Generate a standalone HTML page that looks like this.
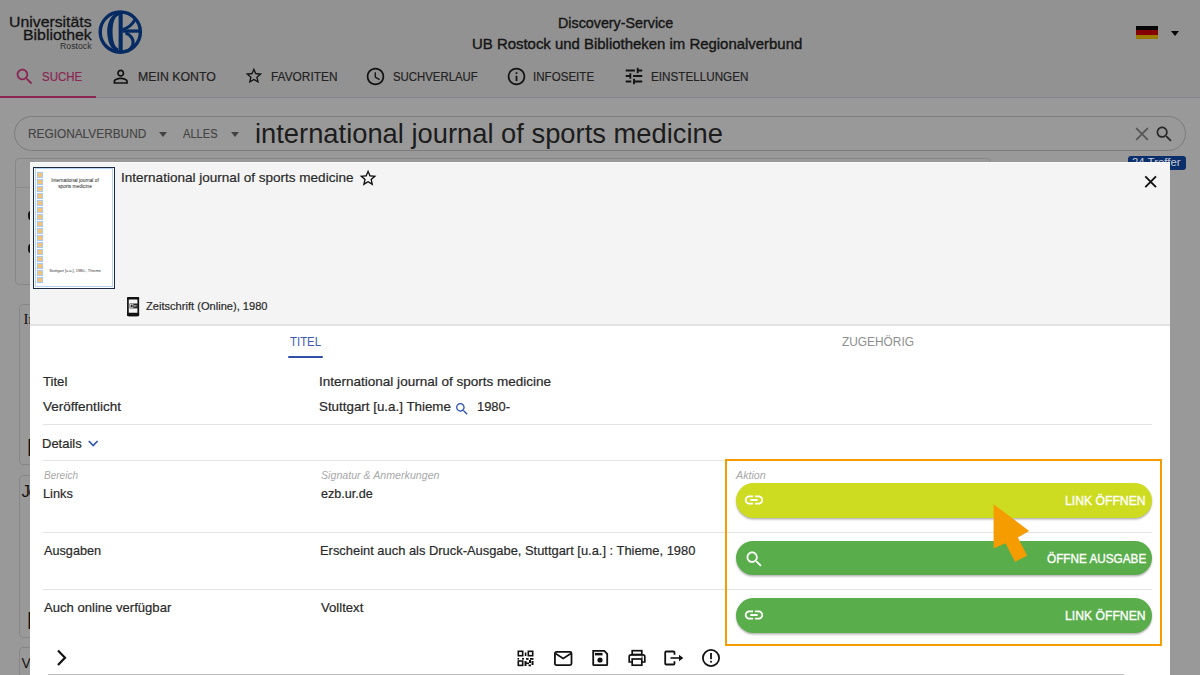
<!DOCTYPE html>
<html><head><meta charset="utf-8">
<style>
*{margin:0;padding:0;box-sizing:border-box}
html,body{width:1200px;height:675px;overflow:hidden;background:#999999;font-family:"Liberation Sans",sans-serif}
.a{position:absolute}
.t{position:absolute;white-space:nowrap;transform-origin:0 0}
.hr{position:absolute;height:1px;background:#e3e3e3}
.btn{position:absolute;left:735.5px;width:416px;height:34.5px;border-radius:17.5px;box-shadow:0 1.5px 2px rgba(0,0,0,.3)}
svg{position:absolute;overflow:visible}
</style></head><body>
<div class="a" style="left:0;top:0;width:1200px;height:97px;background:#929292"></div>
<!-- logo -->
<svg style="left:95px;top:5px" width="50" height="55" viewBox="0 0 50 55">
<circle cx="25.3" cy="27.1" r="20.1" fill="none" stroke="#062b62" stroke-width="3.4"/>
<path fill="#062b62" d="M24 7.6 C15 9 11.5 20 12.3 29 C13 39 16.5 45.5 23 46.3 L23.5 43.5 C19.8 42.5 17.6 36 17.6 27.5 C17.6 18 19.5 11.5 24 10.3 Z"/>
<rect x="23.6" y="7.3" width="4.1" height="39.5" fill="#062b62"/>
<path d="M19.5 44.3 L22.5 45.6" stroke="#062b62" stroke-width="2.2"/>
<path d="M27.5 24.6 C32 23.5 37.5 19.5 40.6 13.8" fill="none" stroke="#062b62" stroke-width="3"/>
<rect x="27.5" y="24.4" width="18" height="3.3" fill="#062b62"/>
<path d="M30.5 27.8 C37 30 39.3 36 37.5 40.5 C36.5 43 34.5 45 32 46.3" fill="none" stroke="#062b62" stroke-width="3"/>
</svg>
<!-- flag -->
<div class="a" style="left:1136px;top:26px;width:22px;height:4.4px;background:#050505"></div>
<div class="a" style="left:1136px;top:30.4px;width:22px;height:4.4px;background:#850000"></div>
<div class="a" style="left:1136px;top:34.8px;width:22px;height:4.4px;background:#9a7b00"></div>
<div class="a" style="left:1171px;top:31px;width:0;height:0;border-left:4.5px solid transparent;border-right:4.5px solid transparent;border-top:5px solid #050505"></div>
<!-- nav icons -->
<svg style="left:13.84px;top:66.1px" width="21.3" height="21.3" viewBox="0 0 24 24"><path fill="#8b2554" d="M15.5 14h-.79l-.28-.27C15.41 12.59 16 11.11 16 9.5 16 5.91 13.09 3 9.5 3S3 5.91 3 9.5 5.91 16 9.5 16c1.61 0 3.09-.59 4.23-1.57l.27.28v.79l5 4.99L20.49 19l-4.99-5zm-6 0C7.01 14 5 11.99 5 9.5S7.01 5 9.5 5 14 7.01 14 9.5 11.99 14 9.5 14z"/></svg>
<svg style="left:109.7px;top:65.5px" width="21.45" height="21.45" viewBox="0 0 24 24"><path fill="#121212" d="M12 5.9c1.16 0 2.1.94 2.1 2.1s-.94 2.1-2.1 2.1S9.9 9.16 9.9 8s.94-2.1 2.1-2.1m0 9c2.97 0 6.1 1.46 6.1 2.1v1.1H5.9V17c0-.64 3.13-2.1 6.1-2.1M12 4C9.79 4 8 5.79 8 8s1.79 4 4 4 4-1.79 4-4-1.79-4-4-4zm0 9c-2.67 0-8 1.34-8 4v3h16v-3c0-2.66-5.33-4-8-4z"/></svg>
<svg style="left:244.35px;top:66.35px" width="19.8" height="19.8" viewBox="0 0 24 24"><path fill="#121212" d="M22 9.24l-7.19-.62L12 2 9.19 8.63 2 9.24l5.46 4.73L5.82 21 12 17.27 18.18 21l-1.63-7.03L22 9.24zM12 15.4l-3.76 2.27 1-4.28-3.32-2.88 4.38-.38L12 6.1l1.71 4.04 4.38.38-3.32 2.88 1 4.28L12 15.4z"/></svg>
<svg style="left:365.25px;top:66.25px" width="21" height="21" viewBox="0 0 24 24"><path fill="#121212" d="M11.99 2C6.47 2 2 6.48 2 12s4.47 10 9.99 10C17.52 22 22 17.52 22 12S17.52 2 11.99 2zM12 20c-4.42 0-8-3.58-8-8s3.58-8 8-8 8 3.58 8 8-3.58 8-8 8zm.5-13H11v6l5.25 3.15.75-1.230-4.5-2.67z"/></svg>
<svg style="left:505.75px;top:66.25px" width="21" height="21" viewBox="0 0 24 24"><path fill="#121212" d="M11 7h2v2h-2zm0 4h2v6h-2zm1-9C6.48 2 2 6.48 2 12s4.48 10 10 10 10-4.48 10-10S17.52 2 12 2zm0 18c-4.41 0-8-3.59-8-8s3.59-8 8-8 8 3.59 8 8-3.59 8-8 8z"/></svg>
<svg style="left:622.75px;top:65.4px" width="22" height="22" viewBox="0 0 24 24"><path fill="#121212" d="M3 17v2h6v-2H3zM3 5v2h10V5H3zm10 16v-2h8v-2h-8v-2h-2v6h2zM7 9v2H3v2h4v2h2V9H7zm14 4v-2H11v2h10zm-6-4h2V7h4V5h-4V3h-2v6z"/></svg>
<div class="a" style="left:0;top:95.8px;width:96px;height:2px;background:#8b2554"></div>
<div class="a" style="left:96px;top:97px;width:1104px;height:1px;background:#85828b"></div>
<!-- search bar -->
<div class="a" style="left:14px;top:116px;width:1172px;height:34.5px;border:1px solid #7c7c7c;border-radius:17.5px"></div>
<div class="a" style="left:159px;top:131.5px;width:0;height:0;border-left:4.5px solid transparent;border-right:4.5px solid transparent;border-top:5px solid #444"></div>
<div class="a" style="left:230.5px;top:131.5px;width:0;height:0;border-left:4.5px solid transparent;border-right:4.5px solid transparent;border-top:5px solid #444"></div>
<svg style="left:1130px;top:122px" width="24" height="24" viewBox="0 0 24 24"><path d="M6.2 6.2 L17.8 17.8 M17.8 6.2 L6.2 17.8" stroke="#555" stroke-width="1.7"/></svg>
<svg style="left:1154.3px;top:124.3px" width="20.6" height="20.6" viewBox="0 0 24 24"><path fill="#2a2a2a" d="M15.5 14h-.79l-.28-.27C15.41 12.59 16 11.11 16 9.5 16 5.91 13.09 3 9.5 3S3 5.91 3 9.5 5.91 16 9.5 16c1.61 0 3.09-.59 4.23-1.57l.27.28v.79l5 4.99L20.49 19l-4.99-5zm-6 0C7.01 14 5 11.99 5 9.5S7.01 5 9.5 5 14 7.01 14 9.5 11.99 14 9.5 14z"/></svg>
<!-- cards behind -->
<div class="a" style="left:14.5px;top:158px;width:976px;height:126.5px;border:1px solid #878787;border-radius:4px"></div>
<div class="a" style="left:15px;top:187px;width:20px;height:1px;background:#8a8a8a"></div>
<div class="a" style="left:18.5px;top:303.5px;width:976px;height:161px;border:1px solid #878787;border-radius:4px"></div>
<div class="a" style="left:18.5px;top:475px;width:976px;height:163px;border:1px solid #878787;border-radius:4px"></div>
<div class="a" style="left:18.5px;top:647px;width:976px;height:60px;border:1px solid #878787;border-radius:4px"></div>
<div class="a" style="left:28.3px;top:210.5px;width:5px;height:9.5px;border-left:2px solid #151515;border-radius:50%"></div>
<div class="a" style="left:28.3px;top:243.5px;width:5px;height:9.5px;border-left:2px solid #151515;border-radius:50%"></div>
<div class="t" style="left:23.5px;top:312px;font-family:'Liberation Serif',serif;font-size:15px;line-height:15px;color:#121212">In</div>
<div class="t" style="left:27.3px;top:436px;font-size:19px;line-height:19px;color:#121212">[</div>
<div class="t" style="left:21.5px;top:483px;font-size:17px;line-height:17px;color:#121212;letter-spacing:-1.5px">Jo</div>
<div class="t" style="left:27.3px;top:608.5px;font-size:19px;line-height:19px;color:#121212">[</div>
<div class="t" style="left:21.5px;top:655.5px;font-size:14px;line-height:14px;color:#121212">V</div>
<div class="a" style="left:1128px;top:156px;width:58px;height:14px;background:#0b2f6b;border-radius:3px"></div>
<div class="t" style="left:9.08px;top:14.03px;font-size:15.5px;line-height:15.5px;color:#141414;-webkit-text-stroke:0.3px #141414;transform:scaleX(1.0200)">Universitäts</div>
<div class="t" style="left:23.38px;top:27.03px;font-size:15.5px;line-height:15.5px;color:#141414;-webkit-text-stroke:0.3px #141414;transform:scaleX(1.0227)">Bibliothek</div>
<div class="t" style="left:60.15px;top:42.12px;font-size:8.3px;line-height:8.3px;color:#2c2c2c;transform:scaleX(1.0517)">Rostock</div>
<div class="t" style="left:557.80px;top:15.45px;font-size:15px;line-height:15px;color:#161616;-webkit-text-stroke:0.4px #161616;transform:scaleX(0.9533)">Discovery-Service</div>
<div class="t" style="left:472.30px;top:36.45px;font-size:15px;line-height:15px;color:#161616;-webkit-text-stroke:0.4px #161616;transform:scaleX(0.9952)">UB Rostock und Bibliotheken im Regionalverbund</div>
<div class="t" style="left:41.66px;top:69.64px;font-size:13.6px;line-height:13.6px;color:#8b2554;-webkit-text-stroke:0.2px #8b2554;transform:scaleX(0.8424)">SUCHE</div>
<div class="t" style="left:137.84px;top:69.64px;font-size:13.6px;line-height:13.6px;color:#222;-webkit-text-stroke:0.2px #222;transform:scaleX(0.9077)">MEIN KONTO</div>
<div class="t" style="left:271.12px;top:69.64px;font-size:13.6px;line-height:13.6px;color:#222;-webkit-text-stroke:0.2px #222;transform:scaleX(0.8750)">FAVORITEN</div>
<div class="t" style="left:392.91px;top:69.64px;font-size:13.6px;line-height:13.6px;color:#222;-webkit-text-stroke:0.2px #222;transform:scaleX(0.8375)">SUCHVERLAUF</div>
<div class="t" style="left:533.15px;top:69.64px;font-size:13.6px;line-height:13.6px;color:#222;-webkit-text-stroke:0.2px #222;transform:scaleX(0.8521)">INFOSEITE</div>
<div class="t" style="left:650.89px;top:69.64px;font-size:13.6px;line-height:13.6px;color:#222;-webkit-text-stroke:0.2px #222;transform:scaleX(0.8594)">EINSTELLUNGEN</div>
<div class="t" style="left:27.87px;top:126.81px;font-size:13.4px;line-height:13.4px;color:#444;-webkit-text-stroke:0.15px #444;transform:scaleX(0.8845)">REGIONALVERBUND</div>
<div class="t" style="left:183.00px;top:126.81px;font-size:13.4px;line-height:13.4px;color:#444;-webkit-text-stroke:0.15px #444;transform:scaleX(0.8293)">ALLES</div>
<div class="t" style="left:255.00px;top:120.04px;font-size:27.3px;line-height:27.3px;color:#1c1c1c;transform:scaleX(1.0011)">international journal of sports medicine</div>
<div class="t" style="left:1132.01px;top:157.42px;font-size:11.5px;line-height:11.5px;color:#c5cad8;transform:scaleX(0.9896)">24 Treffer</div>
<!-- modal -->
<div class="a" style="left:30px;top:162px;width:1140px;height:513px;background:#fff"></div>
<div class="a" style="left:30px;top:162px;width:1140px;height:162.5px;background:#f4f4f4"></div>
<div class="a" style="left:30px;top:324.4px;width:1140px;height:1.4px;background:#e3e3e3"></div>
<div class="a" style="left:30px;top:162px;width:1140px;height:1px;background:#fafafa"></div>
<!-- thumbnail -->
<div class="a" style="left:33.2px;top:166.8px;width:81.6px;height:121.8px;background:#fff;border:1.6px solid #1c2b45"></div>
<div class="a" style="left:34.8px;top:168.4px;width:78.4px;height:118.6px;border:1px solid #b4d3f5"></div>
<svg style="left:36.8px;top:171.8px" width="6" height="112" viewBox="0 0 6 112">
<g fill="#f8c374" stroke="#a6c8f0" stroke-width="1.1">
<rect x="0.5" y="0.5" width="5" height="5"/><rect x="0.5" y="7.5" width="5" height="5"/><rect x="0.5" y="14.5" width="5" height="5"/><rect x="0.5" y="21.5" width="5" height="5"/>
<rect x="0.5" y="28.5" width="5" height="5"/><rect x="0.5" y="35.5" width="5" height="5"/><rect x="0.5" y="42.5" width="5" height="5"/><rect x="0.5" y="49.5" width="5" height="5"/>
<rect x="0.5" y="56.5" width="5" height="5"/><rect x="0.5" y="63.5" width="5" height="5"/><rect x="0.5" y="70.5" width="5" height="5"/><rect x="0.5" y="77.5" width="5" height="5"/>
<rect x="0.5" y="84.5" width="5" height="5"/><rect x="0.5" y="91.5" width="5" height="5"/><rect x="0.5" y="98.5" width="5" height="5"/><rect x="0.5" y="105.5" width="5" height="5"/>
</g></svg>
<div class="a" style="left:45px;top:178.3px;width:60px;text-align:center;font-size:4.8px;line-height:5.2px;color:#111;white-space:nowrap">International journal of<br>sports medicine</div>
<div class="a" style="left:45px;top:268px;width:60px;text-align:center;font-size:3.9px;line-height:5px;color:#333;white-space:nowrap">Stuttgart [u.a.], 1980-, Thieme</div>
<svg style="left:357.5px;top:168.1px" width="20.16" height="20.16" viewBox="0 0 24 24"><path fill="#111" d="M22 9.24l-7.19-.62L12 2 9.19 8.63 2 9.24l5.46 4.73L5.82 21 12 17.27 18.18 21l-1.63-7.03L22 9.24zM12 15.4l-3.76 2.27 1-4.28-3.32-2.88 4.38-.38L12 6.1l1.71 4.04 4.38.38-3.32 2.88 1 4.28L12 15.4z"/></svg>
<svg style="left:1140px;top:171px" width="22" height="22" viewBox="0 0 22 22"><path d="M5.3 5.4 L16 16.2 M16 5.4 L5.3 16.2" stroke="#111" stroke-width="1.9"/></svg>
<!-- phone icon -->
<svg style="left:126.6px;top:297px" width="12.2" height="19.2" viewBox="0 0 12.2 19.2">
<rect x="0.9" y="0.9" width="10.4" height="17.4" rx="1.2" fill="none" stroke="#111" stroke-width="1.7"/>
<rect x="0" y="0" width="12.2" height="2.5" rx="1" fill="#111"/><rect x="0" y="15.7" width="12.2" height="3.5" rx="1.2" fill="#111"/>
<rect x="2.6" y="6.5" width="8.5" height="4.9" fill="#2a2a2a"/><rect x="3.4" y="7.3" width="2.6" height="3.3" fill="none" stroke="#ddd" stroke-width="0.7"/><rect x="7" y="8.5" width="2.5" height="0.9" fill="#ddd"/>
</svg>
<!-- tabs -->
<div class="a" style="left:287.7px;top:355.7px;width:35.4px;height:2px;border-radius:1px;background:#2f4fa8"></div>
<div class="hr" style="left:43px;top:424px;width:1109px"></div>
<svg style="left:86px;top:438px" width="14" height="11" viewBox="0 0 14 11"><path d="M2.8 3 L7.2 7.6 L11.6 3" fill="none" stroke="#2f55b0" stroke-width="1.7"/></svg>
<svg style="left:454.2px;top:401.2px" width="16.1" height="16.1" viewBox="0 0 24 24"><path fill="#2f55b0" d="M15.5 14h-.79l-.28-.27C15.41 12.59 16 11.11 16 9.5 16 5.91 13.09 3 9.5 3S3 5.91 3 9.5 5.91 16 9.5 16c1.61 0 3.09-.59 4.23-1.57l.27.28v.79l5 4.99L20.49 19l-4.99-5zm-6 0C7.01 14 5 11.99 5 9.5S7.01 5 9.5 5 14 7.01 14 9.5 11.99 14 9.5 14z"/></svg>
<div class="hr" style="left:43px;top:460px;width:1109px"></div>
<div class="hr" style="left:43px;top:532px;width:1109px"></div>
<div class="hr" style="left:43px;top:589px;width:1109px"></div>
<!-- action box -->
<div class="a" style="left:725px;top:459px;width:436.5px;height:187px;border:2px solid #f59c00"></div>
<div class="btn" style="top:483px;background:#cddc21"></div>
<div class="btn" style="top:540.5px;background:#5aad4b"></div>
<div class="btn" style="top:598px;background:#5aad4b"></div>
<svg style="left:742.5px;top:489px" width="22" height="22" viewBox="0 0 24 24"><path fill="#fff" d="M3.9 12c0-1.71 1.39-3.1 3.1-3.1h4V7H7c-2.76 0-5 2.24-5 5s2.24 5 5 5h4v-1.9H7c-1.71 0-3.1-1.39-3.1-3.1zM8 13h8v-2H8v2zm9-6h-4v1.9h4c1.71 0 3.1 1.39 3.1 3.1s-1.39 3.1-3.1 3.1h-4V17h4c2.76 0 5-2.24 5-5s-2.24-5-5-5z"/></svg>
<svg style="left:743.7px;top:549.2px" width="20.6" height="20.6" viewBox="0 0 24 24"><path fill="#fff" d="M15.5 14h-.79l-.28-.27C15.41 12.59 16 11.11 16 9.5 16 5.91 13.09 3 9.5 3S3 5.91 3 9.5 5.91 16 9.5 16c1.61 0 3.09-.59 4.23-1.57l.27.28v.79l5 4.99L20.49 19l-4.99-5zm-6 0C7.01 14 5 11.99 5 9.5S7.01 5 9.5 5 14 7.01 14 9.5 11.99 14 9.5 14z"/></svg>
<svg style="left:742.5px;top:604px" width="22" height="22" viewBox="0 0 24 24"><path fill="#fff" d="M3.9 12c0-1.71 1.39-3.1 3.1-3.1h4V7H7c-2.76 0-5 2.24-5 5s2.24 5 5 5h4v-1.9H7c-1.71 0-3.1-1.39-3.1-3.1zM8 13h8v-2H8v2zm9-6h-4v1.9h4c1.71 0 3.1 1.39 3.1 3.1s-1.39 3.1-3.1 3.1h-4V17h4c2.76 0 5-2.24 5-5s-2.24-5-5-5z"/></svg>
<!-- bottom bar -->
<svg style="left:52px;top:645px" width="20" height="24" viewBox="0 0 20 24"><path d="M6 5.5 L13 12.7 L6 20" fill="none" stroke="#111" stroke-width="2.2"/></svg>
<!-- qr -->
<svg style="left:517px;top:649.5px" width="18" height="17" viewBox="0 0 18 17">
<g fill="none" stroke="#111" stroke-width="1.6"><rect x="1.3" y="1.3" width="4.4" height="4.4"/><rect x="11.3" y="1.3" width="4.4" height="4.4"/><rect x="1.3" y="11" width="4.4" height="4.4"/></g>
<g fill="#111"><rect x="7.8" y="2.5" width="1.6" height="3.5"/><rect x="0.5" y="8" width="1.6" height="1.6"/><rect x="5" y="8" width="2" height="1.6"/><rect x="9" y="8" width="2.6" height="1.8"/><rect x="13" y="8" width="3.5" height="1.8"/><rect x="7.5" y="11" width="2" height="5"/><rect x="9" y="12.5" width="3" height="1.6"/><rect x="12" y="10" width="2" height="3"/><rect x="14.5" y="11" width="2" height="4"/><rect x="11.5" y="14.5" width="2.5" height="1.8"/></g>
</svg>
<!-- mail -->
<svg style="left:553px;top:649.5px" width="20" height="17" viewBox="0 0 20 17"><rect x="1.9" y="1.9" width="16.6" height="13.2" rx="1.5" fill="none" stroke="#111" stroke-width="1.8"/><path d="M2.5 3.5 L10.2 8.5 L17.9 3.5" fill="none" stroke="#111" stroke-width="1.6"/></svg>
<!-- save -->
<svg style="left:591px;top:649px" width="18" height="18" viewBox="0 0 18 18"><path d="M2.2 1.9 H13.2 L16.2 4.9 V15.6 Q16.2 16.2 15.6 16.2 H2.8 Q2.2 16.2 2.2 15.6 Z" fill="none" stroke="#111" stroke-width="1.8"/><rect x="4" y="3.9" width="7.5" height="2.5" fill="#111"/><circle cx="9" cy="11" r="2.6" fill="#111"/></svg>
<!-- print -->
<svg style="left:627px;top:649px" width="20" height="18" viewBox="0 0 20 18"><g fill="none" stroke="#111" stroke-width="1.7"><rect x="5.2" y="1.7" width="9.6" height="3.8"/><path d="M5 13 H2.2 V7.5 Q2.2 5.8 4 5.8 H16 Q17.8 5.8 17.8 7.5 V13 H15"/><rect x="5.2" y="10" width="9.6" height="6.2"/></g><rect x="14.3" y="7.5" width="1.3" height="1.2" fill="#111"/></svg>
<!-- export -->
<svg style="left:663px;top:649px" width="22" height="18" viewBox="0 0 22 18"><path d="M11.5 5.8 V3.5 Q11.5 2.5 10.5 2.5 H3.3 Q2.2 2.5 2.2 3.5 V14.5 Q2.2 15.5 3.3 15.5 H10.5 Q11.5 15.5 11.5 14.5 V12.2" fill="none" stroke="#111" stroke-width="1.8"/><path d="M7.5 9 H17" stroke="#111" stroke-width="1.6"/><path d="M16 5.8 L20.3 9 L16 12.2 Z" fill="#111"/></svg>
<!-- alert -->
<svg style="left:701px;top:648px" width="20" height="20" viewBox="0 0 20 20"><circle cx="10" cy="10" r="8.1" fill="none" stroke="#111" stroke-width="1.8"/><rect x="9.1" y="5" width="1.8" height="6.2" fill="#111"/><rect x="9.1" y="12.8" width="1.8" height="1.8" fill="#111"/></svg>
<div class="a" style="left:47.5px;top:673.5px;width:1076px;height:1.5px;background:#bcbcbc"></div>
<div class="t" style="left:120.70px;top:170.64px;font-size:13.6px;line-height:13.6px;color:#2a2a2a;-webkit-text-stroke:0.2px #2a2a2a;transform:scaleX(0.9957)">International journal of sports medicine</div>
<div class="t" style="left:146.40px;top:300.33px;font-size:11.6px;line-height:11.6px;color:#2a2a2a;-webkit-text-stroke:0.2px #2a2a2a;transform:scaleX(0.9575)">Zeitschrift (Online), 1980</div>
<div class="t" style="left:290.30px;top:335.15px;font-size:13px;line-height:13px;color:#3b5bb5;transform:scaleX(0.8771)">TITEL</div>
<div class="t" style="left:842.00px;top:335.15px;font-size:13px;line-height:13px;color:#8e8e8e;transform:scaleX(0.9141)">ZUGEHÖRIG</div>
<div class="t" style="left:43.25px;top:375.15px;font-size:13px;line-height:13px;color:#2a2a2a;-webkit-text-stroke:0.2px #2a2a2a;transform:scaleX(1.0104)">Titel</div>
<div class="t" style="left:318.96px;top:375.15px;font-size:13px;line-height:13px;color:#2a2a2a;-webkit-text-stroke:0.2px #2a2a2a;transform:scaleX(1.0394)">International journal of sports medicine</div>
<div class="t" style="left:43.25px;top:400.15px;font-size:13px;line-height:13px;color:#2a2a2a;-webkit-text-stroke:0.2px #2a2a2a;transform:scaleX(1.0400)">Veröffentlicht</div>
<div class="t" style="left:318.97px;top:400.15px;font-size:13px;line-height:13px;color:#2a2a2a;-webkit-text-stroke:0.2px #2a2a2a;transform:scaleX(1.0276)">Stuttgart [u.a.] Thieme</div>
<div class="t" style="left:476.51px;top:400.15px;font-size:13px;line-height:13px;color:#2a2a2a;-webkit-text-stroke:0.2px #2a2a2a;transform:scaleX(0.9922)">1980-</div>
<div class="t" style="left:42.00px;top:437.15px;font-size:13px;line-height:13px;color:#2a2a2a;-webkit-text-stroke:0.2px #2a2a2a;transform:scaleX(1.0000)">Details</div>
<div class="t" style="left:43.90px;top:470.69px;font-size:10px;line-height:10px;font-style:italic;color:#a8a8a8;transform:scaleX(1.0029)">Bereich</div>
<div class="t" style="left:320.60px;top:470.69px;font-size:10px;line-height:10px;font-style:italic;color:#a8a8a8;transform:scaleX(1.0640)">Signatur &amp; Anmerkungen</div>
<div class="t" style="left:736.00px;top:470.69px;font-size:10px;line-height:10px;font-style:italic;color:#a8a8a8;transform:scaleX(1.0714)">Aktion</div>
<div class="t" style="left:42.92px;top:487.15px;font-size:13px;line-height:13px;color:#2a2a2a;-webkit-text-stroke:0.2px #2a2a2a;transform:scaleX(0.9828)">Links</div>
<div class="t" style="left:320.60px;top:487.15px;font-size:13px;line-height:13px;color:#2a2a2a;-webkit-text-stroke:0.2px #2a2a2a;transform:scaleX(0.9698)">ezb.ur.de</div>
<div class="t" style="left:43.90px;top:544.15px;font-size:13px;line-height:13px;color:#2a2a2a;-webkit-text-stroke:0.2px #2a2a2a;transform:scaleX(0.9759)">Ausgaben</div>
<div class="t" style="left:320.01px;top:544.15px;font-size:13px;line-height:13px;color:#2a2a2a;-webkit-text-stroke:0.2px #2a2a2a;transform:scaleX(0.9920)">Erscheint auch als Druck-Ausgabe, Stuttgart [u.a.] : Thieme, 1980</div>
<div class="t" style="left:43.90px;top:601.15px;font-size:13px;line-height:13px;color:#2a2a2a;-webkit-text-stroke:0.2px #2a2a2a;transform:scaleX(1.0063)">Auch online verfügbar</div>
<div class="t" style="left:320.60px;top:601.15px;font-size:13px;line-height:13px;color:#2a2a2a;-webkit-text-stroke:0.2px #2a2a2a;transform:scaleX(1.0095)">Volltext</div>
<div class="t" style="left:1064.88px;top:493.89px;font-size:13.3px;line-height:13.3px;color:#fff;-webkit-text-stroke:0.35px #fff;transform:scaleX(0.9163)">LINK ÖFFNEN</div>
<div class="t" style="left:1046.52px;top:551.89px;font-size:13.3px;line-height:13.3px;color:#fff;-webkit-text-stroke:0.35px #fff;transform:scaleX(0.8836)">ÖFFNE AUSGABE</div>
<div class="t" style="left:1064.88px;top:608.89px;font-size:13.3px;line-height:13.3px;color:#fff;-webkit-text-stroke:0.35px #fff;transform:scaleX(0.9163)">LINK ÖFFNEN</div>
<!-- cursor -->
<svg style="left:0;top:0" width="1200" height="675" viewBox="0 0 1200 675"><path d="M993.6 504.2 L993.6 548.6 L1005.5 543.3 L1015 561.7 L1027.2 555.8 L1017.9 537.4 L1029.2 530.9 Z" fill="#f59d00"/></svg>
</body></html>
